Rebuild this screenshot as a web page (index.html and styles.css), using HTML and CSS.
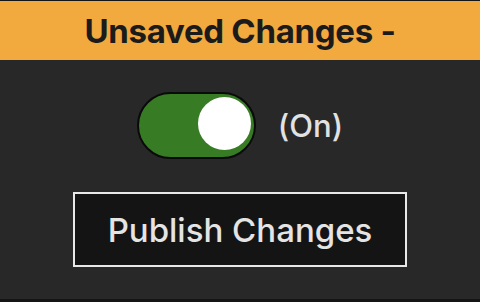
FILE: index.html
```html
<!DOCTYPE html>
<html>
<head>
<meta charset="utf-8">
<link rel="stylesheet" href="styles.css">
</head>
<body>
<div class="panel">
  <header class="banner">Unsaved Changes -</header>
  <main class="content">
    <div class="toggle-row">
      <div class="toggle"><span class="knob"></span></div>
      <span class="state">(On)</span>
    </div>
    <button class="publish">Publish Changes</button>
  </main>
</div>
</body>
</html>
```
FILE: styles.css
```css
html, body {
  margin: 0;
  padding: 0;
  background: #111;
}
.panel {
  width: 480px;
  height: 302px;
  box-sizing: border-box;
  border-top: 1px solid #151515;
  border-bottom: 3px solid #151515;
  background: #282828;
  display: flex;
  flex-direction: column;
  font-family: Inter, "Noto Sans", sans-serif;
}
.banner {
  height: 59px;
  background: #f2a93e;
  color: #1b1b1b;
  font-weight: 700;
  font-size: 33px;
  letter-spacing: -0.3px;
  display: flex;
  align-items: center;
  justify-content: center;
}
.content {
  flex: 1;
  display: flex;
  flex-direction: column;
  align-items: center;
  padding-top: 32px;
}
.toggle-row {
  display: flex;
  align-items: center;
  gap: 22px;
}
.toggle {
  box-sizing: border-box;
  width: 119px;
  height: 67px;
  border: 2px solid #0a0a0a;
  border-radius: 34px;
  background: #377c24;
  display: flex;
  align-items: center;
  justify-content: flex-end;
  padding: 0 3px;
}
.knob {
  width: 53px;
  height: 53px;
  border-radius: 50%;
  background: #fff;
  margin-top: -4px;
}
.state {
  color: #e2e2e2;
  font-size: 31px;
  font-weight: 500;
}
.publish {
  margin-top: 33px;
  width: 334px;
  height: 75px;
  border: 2px solid #e8e8e8;
  background: #141414;
  color: #e4e4e4;
  font-family: Inter, "Noto Sans", sans-serif;
  font-size: 33px;
  font-weight: 500;
  padding: 0;
}
```
